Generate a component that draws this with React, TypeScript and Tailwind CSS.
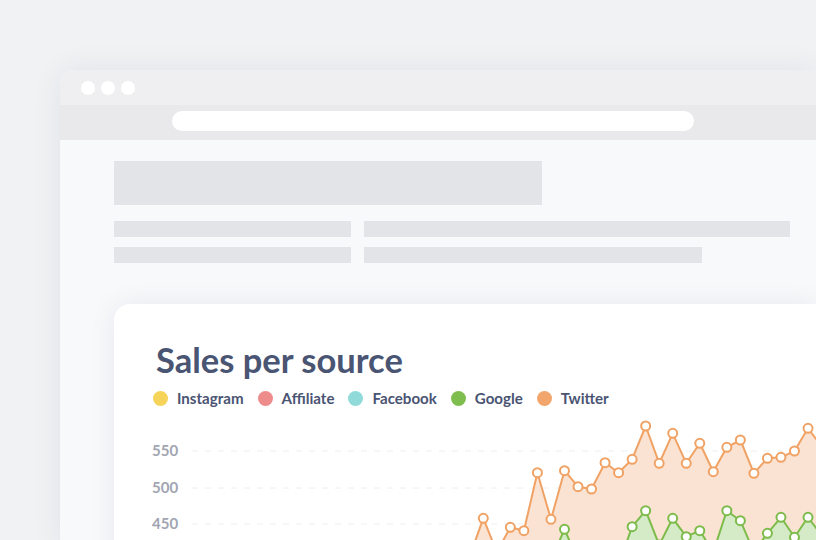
import React from "react";

const legend = [
  { name: "Instagram", color: "bg-[#f6d45a]" },
  { name: "Affiliate", color: "bg-[#ee8b8b]" },
  { name: "Facebook", color: "bg-[#90dada]" },
  { name: "Google", color: "bg-[#80bd4f]" },
  { name: "Twitter", color: "bg-[#f2a66c]" },
];

// y values in page pixels, x = X0 + STEP * i (i starts at -1)
const X0 = 483.3;
const STEP = 13.53;
const twitter = [
  556, 518.3, 552, 527.3, 530.7, 472.7, 519.3, 470.7, 486.7, 489, 462.7, 472.7,
  459.3, 426, 463.3, 433.3, 463.3, 443.3, 471.7, 447.3, 440, 473.3, 458.3,
  457.3, 451, 428.3, 446,
];
const google = [
  600, 590, 590, 590, 580, 575, 560, 529.3, 560, 575, 570, 565, 526.7, 510.7,
  545, 518.3, 536.7, 530.7, 552, 510.7, 520.7, 552, 533.3, 517.3, 537.3, 517.3,
  535,
];

function pts(ys: number[]) {
  return ys.map((y, k) => [X0 + STEP * (k - 1), y] as [number, number]);
}

function Series({ ys, stroke, fill }: { ys: number[]; stroke: string; fill: string }) {
  const p = pts(ys);
  const line = p.map(([x, y], k) => `${k ? "L" : "M"}${x.toFixed(1)} ${y}`).join(" ");
  const area = `${line} L${p[p.length - 1][0].toFixed(1)} 600 L${p[0][0].toFixed(1)} 600 Z`;
  return (
    <g>
      <path d={area} fill={fill} />
      <path d={line} fill="none" stroke={stroke} strokeWidth={2} strokeLinejoin="round" />
      {p.map(([x, y], k) => (
        <circle key={k} cx={x} cy={y} r={4.5} fill="#fff" stroke={stroke} strokeWidth={2} />
      ))}
    </g>
  );
}

function Chart() {
  const grid = [
    { label: "550", y: 451 },
    { label: "500", y: 488 },
    { label: "450", y: 524 },
  ];
  return (
    <svg width={702} height={140} viewBox="114 408 702 140" className="block">
      {grid.map((g) => (
        <g key={g.label}>
          <line x1={192} x2={816} y1={g.y} y2={g.y} stroke="#eceef2" strokeWidth={1} strokeDasharray="6 7" />
          <text
            x={152}
            y={g.y + 4.5}
            fill="#a1a5b1"
            fontSize={15}
            fontWeight={700}
            fontFamily="Lato, sans-serif"
          >
            {g.label}
          </text>
        </g>
      ))}
      <Series ys={twitter} stroke="#f0a265" fill="#fbe3d3" />
      <Series ys={google} stroke="#7dbb4b" fill="#d5ebc8" />
    </svg>
  );
}

export default function App() {
  return (
    <div className="w-[816px] h-[540px] overflow-hidden bg-[#f1f2f4] font-['Lato',sans-serif]">
      <div className="pl-[60px] pt-[70px]">
        <div className="h-[480px] rounded-tl-[14px] overflow-hidden bg-[#f8f9fb] shadow-[0_0_32px_rgba(20,30,50,0.07)]">
          <div className="h-[35px] bg-[#efeff1] flex items-center gap-[6px] pl-[21px]">
            <div className="w-[14px] h-[14px] rounded-full bg-white" />
            <div className="w-[14px] h-[14px] rounded-full bg-white" />
            <div className="w-[14px] h-[14px] rounded-full bg-white" />
          </div>
          <div className="h-[35px] bg-[#e9e9eb] pl-[112px] pt-[6px]">
            <div className="w-[522px] h-[20px] rounded-full bg-white" />
          </div>
          <div className="pl-[54px] pt-[21px]">
            <div className="w-[428px] h-[44px] bg-[#e3e4e7]" />
            <div className="mt-[16px] grid grid-cols-[237px_auto] gap-x-[13px] gap-y-[10px] justify-start">
              <div className="h-[16px] bg-[#e3e4e7]" />
              <div className="w-[426px] h-[16px] bg-[#e3e4e7]" />
              <div className="h-[16px] bg-[#e3e4e7]" />
              <div className="w-[338px] h-[16px] bg-[#e3e4e7]" />
            </div>
            <div className="mt-[41px] h-[260px] rounded-tl-[16px] bg-white shadow-[0_0_28px_rgba(20,30,50,0.07)] pt-[35px]">
              <h1 className="pl-[42px] text-[34.5px] font-bold leading-[1.2] text-[#4a5473]">
                Sales per source
              </h1>
              <div className="pl-[39px] mt-[9px] flex items-center gap-[14px]">
                {legend.map((l) => (
                  <div key={l.name} className="flex items-center gap-[9px]">
                    <span className={`w-[15px] h-[15px] rounded-full ${l.color}`} />
                    <span className="text-[15.1px] font-bold leading-[1.2] text-[#4a5473]">{l.name}</span>
                  </div>
                ))}
              </div>
              <Chart />
            </div>
          </div>
        </div>
      </div>
    </div>
  );
}
